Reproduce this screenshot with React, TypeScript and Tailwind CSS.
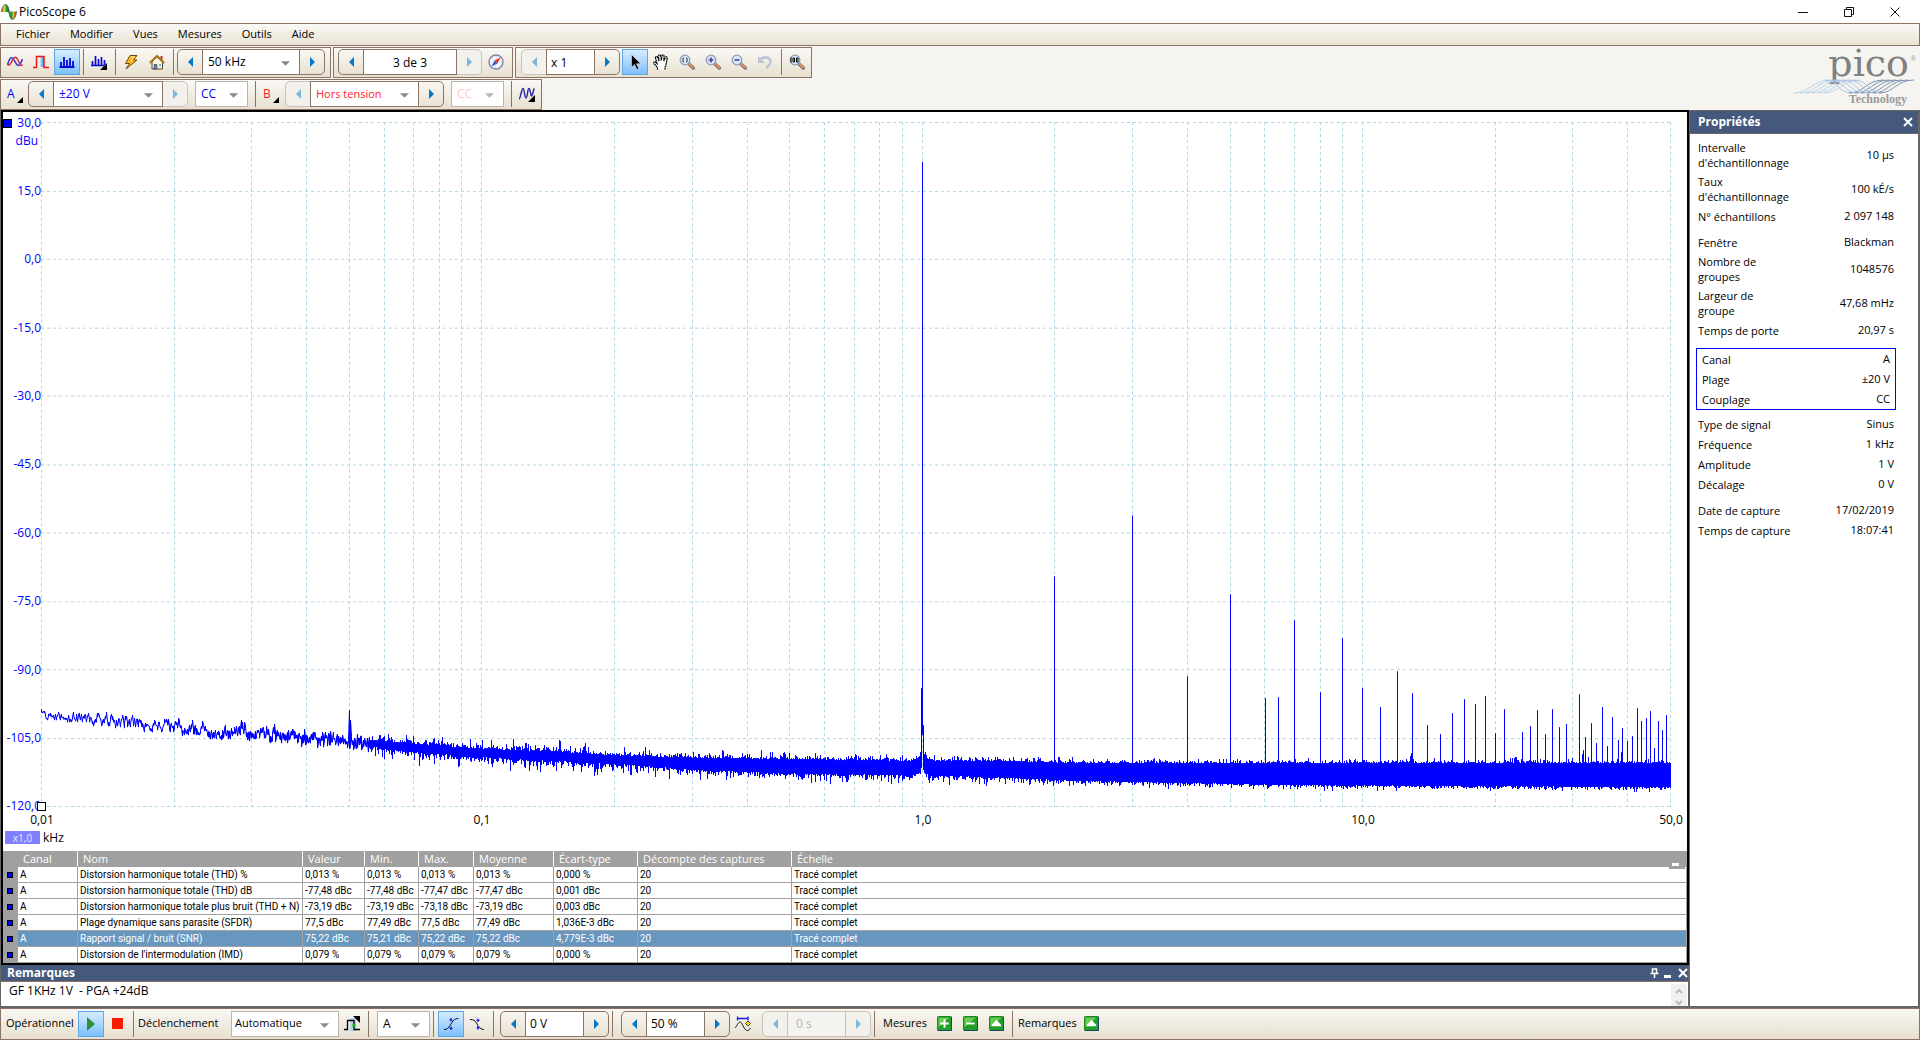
import React from "react";

/* ------------------------------------------------------------------ */
/* Spectrum data                                                       */
/* ------------------------------------------------------------------ */

const PLOT_W = 1630;
const PLOT_H = 686;
const F_MIN = 0.01;
const DECADES = Math.log10(50 / F_MIN);

const freqToX = (f: number) =>
  Math.round((Math.log10(f / F_MIN) / DECADES) * (PLOT_W - 1));

const gridFreqs: number[] = [];
for (const decade of [0.01, 0.1, 1, 10]) {
  for (let k = 1; k < 10; k++) {
    const f = decade * k;
    if (f <= 50.001) gridFreqs.push(f);
  }
}

const yLabels = [
  "30,0", "15,0", "0,0", "-15,0", "-30,0", "-45,0",
  "-60,0", "-75,0", "-90,0", "-105,0", "-120,0",
];
const xLabels = [
  { f: 0.01, text: "0,01" },
  { f: 0.1, text: "0,1" },
  { f: 1, text: "1,0" },
  { f: 10, text: "10,0" },
  { f: 50, text: "50,0" },
];

// Noise floor: [x, upper edge, lower edge] inside the plot
const floorEdges: [number, number, number][] = [
  [0, 592, 596], [40, 594, 599], [80, 598, 603], [120, 602, 608], [160, 604, 610],
  [175, 611, 616], [200, 607, 614], [240, 611, 618], [280, 614, 622], [320, 617, 625],
  [360, 621, 631], [440, 627, 637], [520, 630, 641], [580, 634, 644], [660, 636, 650],
  [740, 637, 653], [800, 638, 654], [870, 639, 655], [960, 639, 657], [1020, 641, 660],
  [1160, 641, 663], [1260, 641, 665], [1460, 641, 666], [1629, 641, 667],
];

// Harmonics and spurs: [x, top]
const spurs: [number, number][] = [
  [0, 588], [308, 589], [309, 599], [441, 619], [518, 619], [519, 620], [880, 567], [882, 604],
  [1013, 455], [1091, 394], [1146, 555], [1189, 473], [1224, 577], [1237, 576],
  [1253, 499], [1279, 571], [1301, 517], [1321, 567], [1339, 586], [1356, 550],
  [1369, 635], [1370, 632], [1371, 572], [1386, 604], [1399, 613], [1411, 592],
  [1423, 578], [1434, 583], [1444, 575], [1454, 612], [1463, 588], [1469, 637],
  [1473, 637], [1474, 636], [1475, 636], [1481, 611], [1489, 605], [1496, 589],
  [1504, 613], [1511, 588], [1518, 606], [1525, 603], [1531, 637], [1538, 573],
  [1541, 633], [1542, 629], [1544, 616], [1547, 636], [1550, 602], [1555, 622],
  [1561, 586], [1566, 625], [1571, 596], [1577, 619], [1580, 631], [1581, 607],
  [1586, 620], [1591, 615], [1596, 587], [1600, 600], [1605, 597], [1609, 590],
  [1613, 627], [1617, 600], [1621, 609], [1625, 594],
];

// Below this column each pixel holds only a few bins, so the line stays thin
const SPARSE_END = 330;

function buildTrace(): string {
  let seed = 20190217;
  const rnd = () => {
    seed = (Math.imul(seed, 1664525) + 1013904223) >>> 0;
    return seed / 4294967296;
  };
  const spurAt = new Map(spurs);
  const carrier = 881;
  let d = "";
  let seg = 0;
  let walk = 0;
  for (let x = 0; x < PLOT_W; x++) {
    while (seg < floorEdges.length - 2 && floorEdges[seg + 1][0] < x) seg++;
    const [xa, ta, ba] = floorEdges[seg];
    const [xb, tb, bb] = floorEdges[seg + 1];
    const t = (x - xa) / (xb - xa);
    let top = ta + (tb - ta) * t;
    let bottom = ba + (bb - ba) * t;
    if (x < SPARSE_END) {
      const density = x / SPARSE_END;
      const span = Math.min(13, 6 + x / 8) - density * 6;
      walk = walk * 0.4 + (rnd() - 0.5) * span;
      const mid = (top + bottom) / 2 + walk;
      top = mid - rnd() * rnd() * (2 + density * 8) - density;
      bottom = mid + rnd() * rnd() * (2 + density * 8) + density;
    } else {
      const spread = Math.max(1.2, 3.4 - (x - 200) / 450);
      top -= -Math.log(1 - rnd() * 0.98) * spread - 1;
      bottom += -Math.log(1 - rnd() * 0.98) * spread * 1.3 - 1;
    }
    const dist = Math.abs(x - carrier);
    if (dist === 0) {
      top = 40;
      bottom = 614;
    } else if (dist < 16) {
      top -= 16 / dist - 1;
      bottom -= 12 / dist - 1;
    }
    const spur = spurAt.get(x);
    if (spur !== undefined) top = spur;
    const y0 = Math.round(top);
    const y1 = Math.max(y0 + 1, Math.round(bottom));
    if (x < SPARSE_END && x > 0) {
      const upFirst = x % 2 === 0;
      d += `L${x + 0.5} ${upFirst ? y0 : y1}V${upFirst ? y1 : y0}`;
    } else {
      d += `M${x + 0.5} ${y0}V${y1}`;
    }
  }
  return d;
}

const tracePath = buildTrace();

/* ------------------------------------------------------------------ */
/* Measurements and properties                                         */
/* ------------------------------------------------------------------ */

const columns = [
  "Canal", "Nom", "Valeur", "Min.", "Max.", "Moyenne",
  "Écart-type", "Décompte des captures", "Échelle",
];

const measurements = [
  ["A", "Distorsion harmonique totale (THD) %", "0,013 %", "0,013 %", "0,013 %", "0,013 %", "0,000 %", "20", "Tracé complet"],
  ["A", "Distorsion harmonique totale (THD) dB", "-77,48 dBc", "-77,48 dBc", "-77,47 dBc", "-77,47 dBc", "0,001 dBc", "20", "Tracé complet"],
  ["A", "Distorsion harmonique totale plus bruit (THD + N)", "-73,19 dBc", "-73,19 dBc", "-73,18 dBc", "-73,19 dBc", "0,003 dBc", "20", "Tracé complet"],
  ["A", "Plage dynamique sans parasite (SFDR)", "77,5 dBc", "77,49 dBc", "77,5 dBc", "77,49 dBc", "1,036E-3 dBc", "20", "Tracé complet"],
  ["A", "Rapport signal / bruit (SNR)", "75,22 dBc", "75,21 dBc", "75,22 dBc", "75,22 dBc", "4,779E-3 dBc", "20", "Tracé complet"],
  ["A", "Distorsion de l'intermodulation (IMD)", "0,079 %", "0,079 %", "0,079 %", "0,079 %", "0,000 %", "20", "Tracé complet"],
];

/* ------------------------------------------------------------------ */
/* Icons                                                               */
/* ------------------------------------------------------------------ */

type IconProps = { children: React.ReactNode; className?: string };
const Icon = ({ children, className = "h-4 w-4" }: IconProps) => (
  <svg viewBox="0 0 16 16" className={className} fill="none" aria-hidden="true">
    {children}
  </svg>
);

const LogoIcon = () => (
  <svg viewBox="0 0 16 16" className="h-4 w-4" aria-hidden="true">
    <defs>
      <linearGradient id="rainbowA" x1="0" x2="1">
        <stop offset="0" stopColor="#d01818" />
        <stop offset=".3" stopColor="#e8e050" />
        <stop offset=".6" stopColor="#20b030" />
        <stop offset="1" stopColor="#203090" />
      </linearGradient>
      <linearGradient id="rainbowB" x1="0" x2="1">
        <stop offset="0" stopColor="#20a8a0" />
        <stop offset=".4" stopColor="#18a020" />
        <stop offset=".6" stopColor="#f0c020" />
        <stop offset="1" stopColor="#b01818" />
      </linearGradient>
    </defs>
    <path d="M.5 8C1 3 2.500.5 4.500.5S8 3 8.500 8Z" fill="url(#rainbowA)" />
    <path d="M7.500 7.500h8C15 12.500 13.500 15.500 11.500 15.500S8 12.500 7.500 7.500Z" fill="url(#rainbowB)" />
    <path d="M.5 8C1 3 2.500.5 4.500.5S7.300 3 8 8s1.800 7.500 3.500 7.500S15 12.500 15.500 7.500" fill="none" stroke="#555" strokeWidth=".8" />
  </svg>
);

const WavesIcon = () => (
  <Icon>
    <path d="M.5 11C2 5 4 2.500 6 4.500S9 11 11 11.500 14 8.500 15.500 5" stroke="#3340c8" strokeWidth="1.600" />
    <path d="M.5 10C2.500 12.500 4 9 5.500 6S9 2 11 6s2 7 4.500 4.500" stroke="#e03040" strokeWidth="1.600" />
  </Icon>
);
const SquareWaveIcon = () => (
  <Icon>
    <defs>
      <linearGradient id="persist">
        <stop offset="0" stopColor="#fff" />
        <stop offset="1" stopColor="#2090e0" />
      </linearGradient>
    </defs>
    <rect x="6" y="3" width="5" height="10" fill="url(#persist)" />
    <path d="M0 13.500h3.500v-11h7.500v11h5" stroke="#f01818" strokeWidth="1.500" />
  </Icon>
);
const SpectrumIcon = () => (
  <Icon>
    <path d="M.5 13h15M2 8v5M5 3v10M8 6v7M11 4v9M14 7v6" stroke="#0808d8" strokeWidth="1.800" />
  </Icon>
);
const SpectrumMenuIcon = () => (
  <Icon>
    <path d="M0 11.500h13M1.500 7v5M4.500 2v10M7.500 5v7M10.500 3v9M13.500 6v5" stroke="#0808d8" strokeWidth="1.700" />
    <path d="M16 9v7H9Z" fill="#000" />
  </Icon>
);
const LightningIcon = () => (
  <Icon>
    <path d="M7 1.500h7L10.500 6H14L3 15l3.500-5.500h-4Z" fill="#f8b820" stroke="#6b4a10" />
    <path d="M8 3h3.500L8 7" stroke="#fff0a0" />
  </Icon>
);
const HouseIcon = () => (
  <Icon>
    <path d="M11.500 2h2v4h-2z" fill="#c03020" />
    <path d="M3 8v7h10.500V8L8 3Z" fill="#fffbe0" stroke="#54442a" />
    <path d="M.8 9 8 2l7.200 7" stroke="#a87820" strokeWidth="2" />
    <path d="M5 10.500h3V15H5z" fill="#5a8ad0" stroke="#333" strokeWidth=".6" />
    <path d="M10 10h2v2.500h-2z" fill="#7ab0e8" />
  </Icon>
);
const CompassIcon = () => (
  <Icon>
    <circle cx="8" cy="8" r="7" fill="#f4f6fc" stroke="#7f86a8" strokeWidth="1.400" />
    <circle cx="8" cy="8" r="5.300" stroke="#b8bfd8" strokeDasharray="1 3" />
    <path d="m12.500 3.500-6 3 3 3Z" fill="#f03020" />
    <path d="m3.500 12.500 6-3-3-3Z" fill="#3858d0" />
  </Icon>
);
const CursorIcon = () => (
  <Icon>
    <path d="M4.500.5v13l3-3 2.300 5 2-1-2.300-4.800h4.200Z" fill="#000" stroke="#fff" strokeWidth=".5" />
  </Icon>
);
const HandIcon = () => (
  <Icon>
    <path
      d="M4.500 15.500v-2L1 9.500C0 8 1.500 7 3 8.500L4 9.500 2.500 4c-.3-1.500 1.700-2 2.200-.5L6 7 5.500 2c0-1.500 2-1.500 2.200 0L8.300 6.500 9 1.800c.2-1.500 2.200-1.300 2 .3L10.800 7l1.400-3.500c.5-1.300 2.300-.8 2 .7L13 10.500c-.3 1.500-1 2-1 5"
      fill="#fff"
      stroke="#000"
      strokeWidth="1.200"
      strokeDasharray="2 .5"
    />
  </Icon>
);
const Magnifier = ({ children }: { children: React.ReactNode }) => (
  <Icon>
    <path d="m9.500 9.500 4.800 4.500" stroke="#6a6a88" strokeWidth="3.400" strokeLinecap="round" />
    <path d="m10.200 9.800 4 3.800" stroke="#f09048" strokeWidth="2" strokeLinecap="round" />
    <circle cx="6" cy="6" r="4.800" fill="#d4eaf6" stroke="#8c9cbc" strokeWidth="1.300" />
    {children}
  </Icon>
);
const UndoIcon = () => (
  <Icon>
    <path d="M3.500 5.500C7 2 13.500 3 13.500 7.500c0 3-2 4.500-4.500 6.500" stroke="#bcc3d4" strokeWidth="2.600" />
    <path d="M1 2v7h7Z" fill="#bcc3d4" />
  </Icon>
);
const GeneratorIcon = () => (
  <Icon>
    <path d="M0 13C1.500 13 2.500 2.500 4 2.500S5.500 12 7 12 8.500 2.500 10 2.500 11.500 10 12.500 10 14.500 3 15.500 2.500" stroke="#2c2ca0" strokeWidth="1.500" />
    <path d="M16 9v7H9Z" fill="#000" />
  </Icon>
);
const TriggerOptionsIcon = () => (
  <Icon>
    <path d="M6 2h6v13H6z" fill="#bcd0f4" />
    <path d="M0 13.500h3.500v-9h6.500v9h6" stroke="#000" strokeWidth="1.300" />
    <path d="M9 0h7v7Z" fill="#000" />
    <path d="M8.500 8h3v3h-3z" fill="#10b020" />
  </Icon>
);
const RisingIcon = () => (
  <Icon>
    <path d="M1 13.500c3 0 4.500-1.500 6-4l2-3C10.500 4 12 2.500 15.500 2.500" stroke="#111" />
    <path d="M8 2v3.500M6.500 3.800h3M8 10.500V14M6.500 12.300h3" stroke="#1818f0" strokeWidth="1.200" />
  </Icon>
);
const FallingIcon = () => (
  <Icon>
    <path d="M1 3.500c3.500 0 5 1 6.500 3.500S10 13 15 13.500" stroke="#111" />
    <path d="M9 2.500V6M7.500 4.300h3M9 10v3.500M7.500 11.800h3" stroke="#1818f0" strokeWidth="1.200" />
  </Icon>
);
const DelayIcon = () => (
  <Icon>
    <path d="M0 12C1.500 11 3 6 5 6s3 5 5 7 3.500 2.500 5.500-1" stroke="#111" />
    <path d="M2 2.500h11M2.500.5v4M13 .5v4" stroke="#1818f0" strokeWidth="1.300" />
    <path d="m13 5 2.500 2.500L13 10l-2.500-2.500Z" fill="#f0d810" stroke="#222" strokeWidth=".8" />
  </Icon>
);
const GreenIcon = ({ d }: { d: string }) => (
  <Icon className="h-[15px] w-[15px]">
    <rect x=".5" y=".5" width="15" height="15" rx="1" fill="#20a028" stroke="#108018" />
    <path d="M1.500 1.500h12L1.500 12Z" fill="#68cc50" />
    <path d="M15.500 1v14.500H1" stroke="#1c3c6c" />
    <path d={d} fill="#fff" />
  </Icon>
);
const UP_D = "M8 4 13 9.500V11H3V9.500Z";
const PLUS_D = "M7 3.500h2V7h3.500v2H9v3.500H7V9H3.500V7H7Z";
const MINUS_D = "M3.500 7h9v2h-9z";

const Cross = ({ className }: { className: string }) => (
  <svg viewBox="0 0 10 10" className={className} fill="none" aria-hidden="true">
    <path d="m1 1 8 8M9 1 1 9" stroke="#fff" strokeWidth="2" />
  </svg>
);

const PicoLogo = () => (
  <svg viewBox="0 0 126 62" className="h-[62px] w-[126px] shrink-0 overflow-visible" role="img" aria-label="pico Technology">
    <text x="117" y="29" textAnchor="end" fontSize="38" fontFamily="'DejaVu Serif', serif" fill="#808080">
      pico
    </text>
    <text x="124" y="14" textAnchor="end" fontSize="7" fontFamily="'Liberation Sans', sans-serif" fill="#999">
      ®
    </text>
    {[0, 1, 2, 3, 4, 5].map((i) => (
      <g key={i} fill="none" strokeWidth="0.9" transform={`translate(${i * 6} 0)`}>
        <path d="M2 46C16 46 22 33 38 33" stroke="#b4cde6" />
        <path d="M32 33C46 33 46 46 60 46" stroke="#a2c0e0" />
        <path d="M57 46C72 46 74 33 92 33" stroke="#7088a8" />
      </g>
    ))}
    <text x="115" y="56" textAnchor="end" fontSize="12" fontWeight="bold" fontFamily="'Liberation Serif', serif" fill="#9a9a9a">
      Technology
    </text>
  </svg>
);

/* ------------------------------------------------------------------ */
/* Toolbar pieces                                                      */
/* ------------------------------------------------------------------ */

const ToolGroup = ({ children }: { children: React.ReactNode }) => (
  <div className="flex h-[31px] items-center border border-[#8b7466] bg-linear-to-b from-[#faf9f6] to-[#e8e0cf] px-px pb-px">
    {children}
  </div>
);

const ToolButton = ({ label, active, children }: { label: string; active?: boolean; children: React.ReactNode }) => (
  <button
    type="button"
    aria-label={label}
    className={
      active
        ? "flex h-[26px] w-[26px] shrink-0 items-center justify-center border border-[#5fa8e8] bg-linear-to-b from-[#d6ecff] to-[#7cc0fc]"
        : "flex h-[26px] w-[26px] shrink-0 items-center justify-center"
    }
  >
    {children}
  </button>
);

const Separator = () => <div className="ml-[3px] mr-0.5 h-[26px] w-px shrink-0 bg-[#8b7466]" />;

const StepArrow = ({ dir, disabled }: { dir: "left" | "right"; disabled?: boolean }) => (
  <svg viewBox="0 0 5 10" className="h-[10px] w-[5px]" aria-hidden="true">
    <path d={dir === "left" ? "M5 0v10L0 5Z" : "M0 0v10l5-5Z"} fill={disabled ? "#7ab8e0" : "#0078cc"} />
  </svg>
);

const DropArrow = ({ faded }: { faded?: boolean }) => (
  <svg viewBox="0 0 10 5" className="pointer-events-none absolute right-[9px] top-[11px] h-[5px] w-[9px]" aria-hidden="true">
    <path d="M0 0h10L5 5Z" fill={faded ? "#bdb6b0" : "#8a8a8a"} />
  </svg>
);

type StepperProps = {
  label: string;
  prevOff?: boolean;
  nextOff?: boolean;
  off?: boolean;
  children: React.ReactNode;
};
const Stepper = ({ label, prevOff, nextOff, off, children }: StepperProps) => (
  <div className="flex h-[26px] shrink-0">
    <button
      type="button"
      aria-label={`${label} précédent`}
      disabled={prevOff}
      className={`flex w-[26px] items-center justify-center rounded-l-[5px] border ${prevOff ? "border-[#c9c2bb] bg-[#f3f1ec]" : "border-[#8b7466]"}`}
    >
      <StepArrow dir="left" disabled={prevOff} />
    </button>
    <div className={`relative -mx-px flex border ${off ? "border-[#c9c2bb] bg-[#f4f3f0]" : "border-[#8b7466] bg-white"}`}>
      {children}
    </div>
    <button
      type="button"
      aria-label={`${label} suivant`}
      disabled={nextOff}
      className={`flex w-[26px] items-center justify-center rounded-r-[5px] border ${nextOff ? "border-[#c9c2bb] bg-[#f3f1ec]" : "border-[#8b7466]"}`}
    >
      <StepArrow dir="right" disabled={nextOff} />
    </button>
  </div>
);

const Picker = ({ label, value, className, faded }: { label: string; value: string; className: string; faded?: boolean }) => (
  <>
    <select aria-label={label} defaultValue={value} className={`h-full appearance-none bg-transparent pl-[5px] outline-none ${className}`}>
      <option>{value}</option>
    </select>
    <DropArrow faded={faded} />
  </>
);

const BoxedPicker = (props: { label: string; value: string; className: string; faded?: boolean }) => (
  <div className="relative flex h-[26px] shrink-0 border border-[#bdb5ad] bg-white">
    <Picker {...props} />
  </div>
);

const Field = ({ label, value, className }: { label: string; value: string; className: string }) => (
  <input aria-label={label} defaultValue={value} className={`h-full bg-transparent text-xs outline-none ${className}`} />
);

const ChannelButton = ({ name, className }: { name: string; className: string }) => (
  <button type="button" aria-label={`Canal ${name}`} className={`flex h-[26px] w-[26px] items-center pl-[5px] text-xs ${className}`}>
    {name}
    <svg viewBox="0 0 6 6" className="ml-0.5 mt-3 h-1.5 w-1.5" aria-hidden="true">
      <path d="M6 0v6H0Z" fill="#000" />
    </svg>
  </button>
);

/* ------------------------------------------------------------------ */
/* Panels                                                              */
/* ------------------------------------------------------------------ */

const Spectrum = () => (
  <div className="flex min-h-0 flex-1 flex-col">
    <div className="flex min-h-0 flex-1 pr-4 pt-2.5">
      <div className="relative flex w-[38px] shrink-0 flex-col justify-between text-right text-xs text-[#0000ff]">
        <span className="absolute left-0 -top-[3px] h-[9px] w-[9px] border border-black bg-[#0000ff]" />
        <span className="absolute right-[3px] top-[11px]">dBu</span>
        {yLabels.map((t) => (
          <div key={t} className="flex h-px items-center justify-end">
            {t}
          </div>
        ))}
      </div>
      <div className="relative min-w-0 flex-1">
        <svg
          viewBox={`0 0 ${PLOT_W} ${PLOT_H}`}
          preserveAspectRatio="none"
          className="absolute inset-0 h-full w-full"
          shapeRendering="crispEdges"
          fill="none"
          role="img"
          aria-label="Spectre du canal A"
        >
          <g stroke="#add8e6" strokeDasharray="3 3">
            {gridFreqs.map((f) => (
              <path key={f} d={`M${freqToX(f) + 0.5} 0V${PLOT_H}`} />
            ))}
            {yLabels.map((t, i) => (
              <path key={t} d={`M0 ${Math.round(i * 68.5) + 0.5}H${PLOT_W}`} />
            ))}
          </g>
          <path d={tracePath} stroke="#0000ff" />
        </svg>
        <span className="absolute -bottom-1 -left-1 h-[9px] w-[9px] border border-black bg-white" />
      </div>
    </div>
    <div className="relative ml-[38px] mr-4 h-6 shrink-0 text-xs">
      {xLabels.map(({ f, text }) => (
        <span
          key={text}
          className="absolute top-[5px] -translate-x-1/2"
          style={{ left: `${((freqToX(f) + 1) / PLOT_W) * 100}%` }}
        >
          {text}
        </span>
      ))}
    </div>
    <div className="flex h-5 shrink-0 items-start gap-[3px] pl-0.5 text-xs leading-[14px]">
      <span className="flex h-[13px] w-[35px] items-center justify-center bg-[#8080ff] text-[10px] text-[#e4e4ff]">x1,0</span>
      kHz
    </div>
  </div>
);

const Measurements = () => (
  <div className="relative shrink-0">
    <table className="w-full table-fixed border-separate border-spacing-0 text-left">
      <colgroup>
        <col className="w-[15px]" />
        <col className="w-[60px]" />
        <col className="w-[225px]" />
        <col className="w-[62px]" />
        <col className="w-[54px]" />
        <col className="w-[55px]" />
        <col className="w-[80px]" />
        <col className="w-[84px]" />
        <col className="w-[154px]" />
        <col />
      </colgroup>
      <thead>
        <tr className="h-4 bg-[#a0a0a0] text-[11px] text-white">
          <th className="p-0" aria-label="Couleur" />
          {columns.map((c, i) => (
            <th
              key={c}
              className={`whitespace-nowrap border-y border-y-[#a0a0a0] py-0 pl-[5px] font-normal leading-[14px] ${i < columns.length - 1 ? "border-r border-r-white" : ""}`}
            >
              {c}
            </th>
          ))}
        </tr>
      </thead>
      <tbody className="font-[Roboto,'Open_Sans',sans-serif] text-[10px] leading-[15px]">
        {measurements.map((row, r) => (
          <tr key={row[1]} className={r === 4 ? "h-4 bg-[#6796bf] text-white" : "h-4 bg-white text-black"}>
            <td className="bg-[#a0a0a0] p-0">
              <div className="ml-1 h-1.5 w-1.5 border border-black bg-[#0000ff]" />
            </td>
            {row.map((cell, c) => (
              <td key={c} className="whitespace-nowrap border-b border-r border-[#a0a0a0] py-0 pl-0.5">
                {cell}
              </td>
            ))}
          </tr>
        ))}
      </tbody>
    </table>
    <button type="button" aria-label="Réduire les mesures" className="absolute right-0.5 top-2.5 flex h-2 w-4 items-start bg-[#a0a0a0] pl-[3px] pt-0.5">
      <span className="h-[3px] w-[7px] bg-white" />
    </button>
  </div>
);

type RowProps = { label: string; value: string; lines?: string };
const Row = ({ label, value, lines }: RowProps) => (
  <div className={`flex items-center justify-between ${lines ? "h-[34px]" : "h-5"}`}>
    <dt className={`leading-[15px] ${lines ?? ""}`}>{label}</dt>
    <dd>{value}</dd>
  </div>
);

const Properties = () => (
  <aside className="flex w-[230px] shrink-0 flex-col border-r-2 border-t border-[#666] bg-white">
    <header className="flex h-[23px] items-center justify-between border-b border-[#666] bg-[#44597b] pl-2 pr-[5px]">
      <h2 className="text-xs font-bold text-white">Propriétés</h2>
      <button type="button" aria-label="Fermer">
        <Cross className="h-[10px] w-[10px]" />
      </button>
    </header>
    <dl className="px-2 pt-1 text-[11px] text-black">
      <div className="pr-4">
        <Row label="Intervalle d'échantillonnage" value="10 µs" lines="w-[100px]" />
        <Row label="Taux d'échantillonnage" value="100 kÉ/s" lines="w-[100px]" />
        <Row label="N° échantillons" value="2 097 148" />
      </div>
      <div className="pr-4 pt-1.5">
        <Row label="Fenêtre" value="Blackman" />
        <Row label="Nombre de groupes" value="1048576" lines="w-[70px]" />
        <Row label="Largeur de groupe" value="47,68 mHz" lines="w-[70px]" />
        <Row label="Temps de porte" value="20,97 s" />
      </div>
      <div className="-ml-0.5 mr-3.5 mt-2 border border-[#0000ff] px-[5px]">
        <Row label="Canal" value="A" />
        <Row label="Plage" value="±20 V" />
        <Row label="Couplage" value="CC" />
      </div>
      <div className="pr-4 pt-1">
        <Row label="Type de signal" value="Sinus" />
        <Row label="Fréquence" value="1 kHz" />
        <Row label="Amplitude" value="1 V" />
        <Row label="Décalage" value="0 V" />
      </div>
      <div className="pr-4 pt-1.5">
        <Row label="Date de capture" value="17/02/2019" />
        <Row label="Temps de capture" value="18:07:41" />
      </div>
    </dl>
  </aside>
);

const Notes = () => (
  <section className="mr-0.5 flex shrink-0 flex-col">
    <header className="flex h-[17px] items-center justify-between border-b border-[#8b7466] bg-[#44597b] pl-1.5">
      <h2 className="text-xs font-bold leading-4 text-white">Remarques</h2>
      <div className="flex items-center gap-[5px]">
        <button type="button" aria-label="Épingler">
          <svg viewBox="0 0 9 10" className="h-[10px] w-[9px]" fill="none" aria-hidden="true">
            <path d="M2.500 5V1h4v4M.5 5.500h8M4.500 5v5" stroke="#fff" strokeWidth="1.500" />
          </svg>
        </button>
        <button type="button" aria-label="Réduire" className="flex h-2.5 w-[7px] items-end">
          <span className="h-[3px] w-full bg-white" />
        </button>
        <button type="button" aria-label="Fermer" className="ml-0.5">
          <Cross className="h-[10px] w-[10px]" />
        </button>
      </div>
    </header>
    <div className="flex h-6 bg-white">
      <textarea
        aria-label="Remarques"
        defaultValue="GF 1KHz 1V  - PGA +24dB"
        className="h-6 flex-1 resize-none overflow-hidden pl-2 text-xs leading-[18px] text-black outline-none"
      />
      <div className="mr-px mt-0.5 flex w-4 flex-col items-center justify-between overflow-hidden bg-[#f0f0f0] pt-1">
        {["m1 5 3-3 3 3", "m1 1 3 3 3-3"].map((d, i) => (
          <button key={d} type="button" className="flex" aria-label={i === 0 ? "Défiler vers le haut" : "Défiler vers le bas"}>
            <svg viewBox="0 0 8 6" className="h-1.5 w-2" fill="none" aria-hidden="true">
              <path d={d} stroke="#b8b8b8" strokeWidth="1.800" />
            </svg>
          </button>
        ))}
      </div>
    </div>
  </section>
);

/* ------------------------------------------------------------------ */
/* Application                                                         */
/* ------------------------------------------------------------------ */

export default function App() {
  return (
    <div className="flex h-screen min-h-[640px] flex-col overflow-hidden bg-[#f5f4f1] font-['Open_Sans','Noto_Sans',sans-serif] text-black">
      <header className="flex h-[23px] shrink-0 items-center bg-white pl-px">
        <LogoIcon />
        <h1 className="ml-0.5 flex-1 text-xs">PicoScope 6</h1>
        <div className="flex pr-0.5">
          {[
            ["Réduire", "M0 5.500h10"],
            ["Restaurer", "M.5 2.500h7v7h-7zM2.500 2.500v-2h7v7h-2"],
            ["Fermer", "m.5.5 9 9M9.500.5l-9 9"],
          ].map(([label, d]) => (
            <button key={label} type="button" aria-label={label} className="flex h-[23px] w-[46px] items-center justify-center">
              <svg viewBox="0 0 10 10" className="h-[10px] w-[10px]" fill="none" aria-hidden="true">
                <path d={d} stroke="#111" />
              </svg>
            </button>
          ))}
        </div>
      </header>

      <nav className="flex h-[23px] shrink-0 items-center gap-5 border border-[#8b7466] bg-linear-to-b from-[#faf9f6] to-[#e9e2d2] pl-[15px] text-[11px]">
        {["Fichier", "Modifier", "Vues", "Mesures", "Outils", "Aide"].map((m) => (
          <button key={m} type="button">
            {m}
          </button>
        ))}
      </nav>

      <div className="flex h-16 shrink-0 justify-between pr-0.5 pt-px text-[11px]">
        <div className="flex flex-col items-start gap-px">
          <div className="flex gap-0.5">
            <ToolGroup>
              <ToolButton label="Mode oscilloscope"><WavesIcon /></ToolButton>
              <ToolButton label="Mode persistance"><SquareWaveIcon /></ToolButton>
              <ToolButton label="Mode spectre" active><SpectrumIcon /></ToolButton>
              <Separator />
              <ToolButton label="Options de spectre"><SpectrumMenuIcon /></ToolButton>
              <Separator />
              <ToolButton label="Configuration automatique"><LightningIcon /></ToolButton>
              <ToolButton label="Accueil"><HouseIcon /></ToolButton>
              <Separator />
              <span className="w-px" />
              <Stepper label="Plage de fréquences">
                <Picker label="Plage de fréquences" value="50 kHz" className="w-24 text-xs" />
              </Stepper>
              <span className="w-1" />
            </ToolGroup>
            <ToolGroup>
              <span className="w-[3px]" />
              <Stepper label="Tampon" nextOff>
                <Field label="Tampon" value="3 de 3" className="w-[92px] text-center" />
              </Stepper>
              <span className="w-px" />
              <ToolButton label="Navigateur de tampons"><CompassIcon /></ToolButton>
              <span className="w-0.5" />
            </ToolGroup>
            <ToolGroup>
              <span className="w-1" />
              <Stepper label="Zoom" prevOff>
                <Field label="Zoom" value="x 1" className="w-[47px] pl-1" />
              </Stepper>
              <span className="w-0.5" />
              <ToolButton label="Sélection" active><CursorIcon /></ToolButton>
              <ToolButton label="Main"><HandIcon /></ToolButton>
              <ToolButton label="Zoom fenêtre">
                <Magnifier><path d="M4.800 4H4v4h.8M7.200 4H8v4h-.8" stroke="#334" /></Magnifier>
              </ToolButton>
              <ToolButton label="Zoom avant">
                <Magnifier><path d="M6 3.500v5M3.500 6h5" stroke="#6038a0" strokeWidth="1.600" /></Magnifier>
              </ToolButton>
              <ToolButton label="Zoom arrière">
                <Magnifier><path d="M3.500 6h5" stroke="#6038a0" strokeWidth="1.600" /></Magnifier>
              </ToolButton>
              <ToolButton label="Annuler le zoom"><UndoIcon /></ToolButton>
              <Separator />
              <ToolButton label="Zoom 100 %">
                <Magnifier>
                  <path d="M2 3.500v5M4 4h1.500v4H4zM7.500 4H9v4H7.500z" stroke="#000" />
                </Magnifier>
              </ToolButton>
            </ToolGroup>
          </div>
          <ToolGroup>
            <ChannelButton name="A" className="text-[#0000ff]" />
            <Stepper label="Plage A" nextOff>
              <Picker label="Plage A" value="±20 V" className="w-[108px] text-xs text-[#0000ff]" />
            </Stepper>
            <span className="w-[7px]" />
            <BoxedPicker label="Couplage A" value="CC" className="w-[51px] text-xs text-[#0000ff]" />
            <span className="w-1" />
            <Separator />
            <ChannelButton name="B" className="text-[#ff2030]" />
            <span className="w-px" />
            <Stepper label="Plage B" prevOff>
              <Picker label="Plage B" value="Hors tension" className="w-[107px] text-[#ff2030]" />
            </Stepper>
            <span className="w-[7px]" />
            <BoxedPicker label="Couplage B" value="CC" className="w-[51px] text-xs text-[#ffc8cc]" faded />
            <span className="w-1" />
            <Separator />
            <ToolButton label="Générateur de signal"><GeneratorIcon /></ToolButton>
          </ToolGroup>
        </div>
        <PicoLogo />
      </div>

      <div className="flex min-h-0 flex-1 border-b-2 border-[#666]">
        <main className="flex min-w-0 flex-1 flex-col border-l border-[#666] bg-[#666]">
          <section className="mr-px flex min-h-0 flex-1 flex-col border-2 border-black bg-white">
            <Spectrum />
            <Measurements />
          </section>
          <Notes />
        </main>
        <Properties />
      </div>

      <footer className="flex h-8 shrink-0 items-center border border-[#8b7466] bg-linear-to-b from-[#f8f7f4] to-[#e8e0cf] pb-px pl-[5px] text-[11px]">
        <span className="w-[72px]">Opérationnel</span>
        <ToolButton label="Démarrer" active>
          <svg viewBox="0 0 10 14" className="h-3.5 w-2.5" aria-hidden="true">
            <path d="M1 0v14l8-7Z" fill="#309030" />
          </svg>
        </ToolButton>
        <ToolButton label="Arrêter">
          <span className="h-[11px] w-[11px] bg-[#ff1800]" />
        </ToolButton>
        <Separator />
        <label htmlFor="trigger" className="w-[95px] pl-0.5">Déclenchement</label>
        <div className="relative flex h-[26px] border border-[#bdb5ad] bg-white">
          <select id="trigger" defaultValue="Automatique" className="h-full w-[106px] appearance-none bg-transparent pl-[3px] outline-none">
            <option>Automatique</option>
          </select>
          <DropArrow />
        </div>
        <ToolButton label="Déclenchement avancé"><TriggerOptionsIcon /></ToolButton>
        <Separator />
        <span className="w-1.5" />
        <BoxedPicker label="Canal de déclenchement" value="A" className="w-[51px] text-xs" />
        <Separator />
        <span className="w-0.5" />
        <ToolButton label="Front montant" active><RisingIcon /></ToolButton>
        <ToolButton label="Front descendant"><FallingIcon /></ToolButton>
        <Separator />
        <span className="w-1" />
        <Stepper label="Seuil">
          <Field label="Seuil" value="0 V" className="w-[57px] pl-1" />
        </Stepper>
        <Separator />
        <span className="w-1.5" />
        <Stepper label="Pré-déclenchement">
          <Field label="Pré-déclenchement" value="50 %" className="w-[57px] pl-1" />
        </Stepper>
        <ToolButton label="Retard"><DelayIcon /></ToolButton>
        <span className="w-1.5" />
        <Stepper label="Délai" prevOff nextOff off>
          <Field label="Délai" value="0 s" className="w-[57px] pl-2 text-[#b8b4b0]" />
        </Stepper>
        <Separator />
        <span className="w-[54px] pl-1.5">Mesures</span>
        <ToolButton label="Ajouter une mesure"><GreenIcon d={PLUS_D} /></ToolButton>
        <ToolButton label="Supprimer une mesure"><GreenIcon d={MINUS_D} /></ToolButton>
        <ToolButton label="Afficher les mesures"><GreenIcon d={UP_D} /></ToolButton>
        <Separator />
        <span className="w-[63px] pl-[3px]">Remarques</span>
        <ToolButton label="Afficher les remarques"><GreenIcon d={UP_D} /></ToolButton>
      </footer>
    </div>
  );
}
